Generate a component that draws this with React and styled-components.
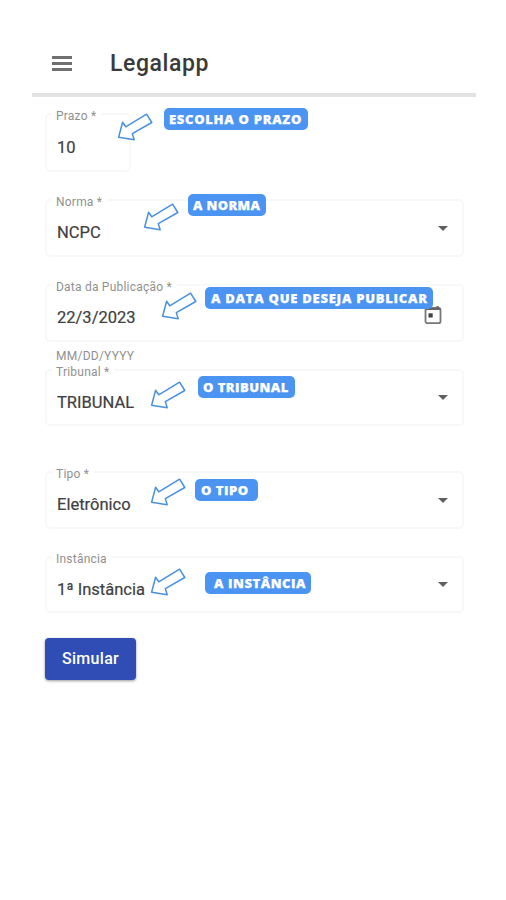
import styled, { createGlobalStyle } from "styled-components";

const fields = [
  {
    key: "prazo",
    label: "Prazo *",
    value: "10",
    width: 86,
    height: 59,
    gap: 27,
    arrow: { x: 71, y: -1 },
    tag: { text: "ESCOLHA O PRAZO", x: 119, y: -5, w: 144, space: 0.72 },
  },
  {
    key: "norma",
    label: "Norma *",
    value: "NCPC",
    icon: "caret",
    gap: 27,
    arrow: { x: 97, y: 3 },
    tag: { text: "A NORMA", x: 143, y: -5, w: 78, space: 0.35 },
  },
  {
    key: "data",
    label: "Data da Publicação *",
    value: "22/3/2023",
    icon: "calendar",
    helper: "MM/DD/YYYY",
    gap: 27,
    arrow: { x: 115, y: 7 },
    tag: { text: "A DATA QUE DESEJA PUBLICAR", x: 160, y: 3, w: 228, pad: 6, space: 0.75 },
  },
  {
    key: "tribunal",
    label: "Tribunal *",
    value: "TRIBUNAL",
    icon: "caret",
    height: 57,
    gap: 45,
    arrow: { x: 104, y: 11 },
    tag: { text: "O TRIBUNAL", x: 153, y: 7, w: 97, space: 0.45 },
  },
  {
    key: "tipo",
    label: "Tipo *",
    value: "Eletrônico",
    icon: "caret",
    gap: 27,
    arrow: { x: 104, y: 6 },
    tag: { text: "O TIPO", x: 150, y: 8, w: 63, pad: 6, space: 0.5 },
  },
  {
    key: "instancia",
    label: "Instância",
    value: "1ª Instância",
    icon: "caret",
    height: 57,
    gap: 25,
    arrow: { x: 104, y: 11 },
    tag: { text: "A INSTÂNCIA", x: 160, y: 16, w: 106, pad: 9, space: 0.55 },
  },
];

const Arrow = ({ x, y }) => (
  <STArrow $x={x} $y={y} width="38" height="30" viewBox="0 0 38 30">
    <path
      d="M30.6 2.2 L35.8 10.5 L16.3 21.6 L18.2 27.7 L2.6 25.2 L6.6 10.3 L9.7 14.8 Z"
      fill="#fff"
      stroke="#4a90dc"
      strokeWidth="1.5"
      strokeLinejoin="round"
    />
  </STArrow>
);

const Calendar = () => (
  <STCalendar width="18" height="20" viewBox="0 0 18 20">
    <rect x="1.5" y="3" width="15" height="15.2" rx="2" fill="none" stroke="#777" strokeWidth="1.8" />
    <path d="M2 4 H16 M13.5 1 V4" stroke="#666" strokeWidth="2.2" />
    <rect x="4.5" y="8.3" width="4.2" height="4.2" fill="#444" />
  </STCalendar>
);

export default function App() {
  return (
    <>
      <GlobalStyle />
      <STPage>
        <STHeader>
          <STMenu type="button" aria-label="Menu">
            <STMenuLine />
            <STMenuLine />
            <STMenuLine />
          </STMenu>
          <STTitle>Legalapp</STTitle>
        </STHeader>
        <STForm>
          {fields.map((item) => (
            <STField key={item.key} $gap={item.gap}>
              <STBox $width={item.width} $height={item.height}>
                <STLabel>{item.label}</STLabel>
                <STValue>{item.value}</STValue>
                {item.icon === "caret" && <STCaret />}
                {item.icon === "calendar" && <Calendar />}
              </STBox>
              {item.helper && (
                <STHelperRow>
                  <STHelper>{item.helper}</STHelper>
                </STHelperRow>
              )}
              <Arrow {...item.arrow} />
              <STTag
                $x={item.tag.x}
                $y={item.tag.y}
                $w={item.tag.w}
                $pad={item.tag.pad}
                $space={item.tag.space}
              >
                {item.tag.text}
              </STTag>
            </STField>
          ))}
          <STButton type="button">Simular</STButton>
        </STForm>
      </STPage>
    </>
  );
}

const GlobalStyle = createGlobalStyle`
  * {
    box-sizing: border-box;
  }
  body {
    margin: 0;
    background: #fff;
    font-family: Roboto, "Liberation Sans", sans-serif;
  }
`;

const STPage = styled.div`
  width: 506px;
  height: 900px;
  padding: 32px 30px 0 32px;
  overflow: hidden;
  background: #fff;
`;

const STHeader = styled.header`
  display: flex;
  align-items: center;
  height: 65px;
  padding: 1px 0 0 20px;
  border-bottom: 4px solid #e3e3e3;
`;

const STMenu = styled.button`
  display: flex;
  flex-direction: column;
  gap: 3px;
  width: 20px;
  margin-right: 38px;
  padding: 0;
  border: 0;
  background: none;
`;

const STMenuLine = styled.span`
  width: 20px;
  height: 3px;
  background: #707070;
`;

const STTitle = styled.h1`
  margin: 0;
  padding-top: 2px;
  font-size: 23px;
  font-weight: 500;
  line-height: 28px;
  letter-spacing: 0.6px;
  color: #3a3a3a;
`;

const STForm = styled.main`
  display: flex;
  flex-direction: column;
  align-items: flex-start;
  padding: 16px 13px 0;
`;

const STField = styled.div`
  position: relative;
  width: 419px;
  margin-bottom: ${(p) => p.$gap}px;
`;

const STBox = styled.div`
  position: relative;
  display: flex;
  align-items: center;
  justify-content: space-between;
  width: ${(p) => p.$width || 419}px;
  height: ${(p) => p.$height || 58}px;
  padding: 8px 14px 0 10px;
  border: 2px solid #f8f8f8;
  border-radius: 5px;
`;

/* floating label, sits on the outline */
const STLabel = styled.label`
  position: absolute;
  top: -6px;
  left: 4px;
  padding: 0 5px;
  background: #fff;
  font-size: 12px;
  line-height: 14px;
  letter-spacing: 0.22px;
  white-space: nowrap;
  color: #909090;
`;

const STValue = styled.span`
  padding-top: 2px;
  font-size: 16.5px;
  line-height: 22px;
  white-space: nowrap;
  color: #404040;
  -webkit-text-stroke: 0.2px #404040;
`;

const STCaret = styled.span`
  width: 0;
  height: 0;
  margin-bottom: 8px;
  border-left: 5px solid transparent;
  border-right: 5px solid transparent;
  border-top: 5px solid #606060;
`;

const STCalendar = styled.svg`
  margin: 0 6px 4px 0;
`;

/* keeps the hint out of the height so the next field follows closely */
const STHelperRow = styled.div`
  height: 0;
  padding-left: 11px;
`;

const STHelper = styled.span`
  display: block;
  padding-top: 7px;
  font-size: 12px;
  line-height: 14px;
  letter-spacing: 0.25px;
  color: #909090;
`;

const STArrow = styled.svg`
  position: absolute;
  left: ${(p) => p.$x}px;
  top: ${(p) => p.$y}px;
`;

const STTag = styled.span`
  position: absolute;
  left: ${(p) => p.$x}px;
  top: ${(p) => p.$y}px;
  width: ${(p) => p.$w}px;
  height: 22px;
  padding-left: ${(p) => p.$pad || 5}px;
  border-radius: 5px;
  background: #4b94f2;
  font-family: "Open Sans", "Noto Sans", sans-serif;
  font-size: 13px;
  font-weight: 800;
  line-height: 22px;
  letter-spacing: ${(p) => p.$space}px;
  white-space: nowrap;
  color: #fff;
  -webkit-text-stroke: 0.25px #fff;
`;

const STButton = styled.button`
  width: 91px;
  height: 42px;
  padding: 0 0 2px;
  border: 0;
  border-radius: 4px;
  background: #304db6;
  box-shadow: 0 1px 3px rgba(0, 0, 0, 0.4);
  font-family: Roboto, "Liberation Sans", sans-serif;
  font-size: 16px;
  font-weight: 500;
  letter-spacing: 0.3px;
  color: #fff;
`;
